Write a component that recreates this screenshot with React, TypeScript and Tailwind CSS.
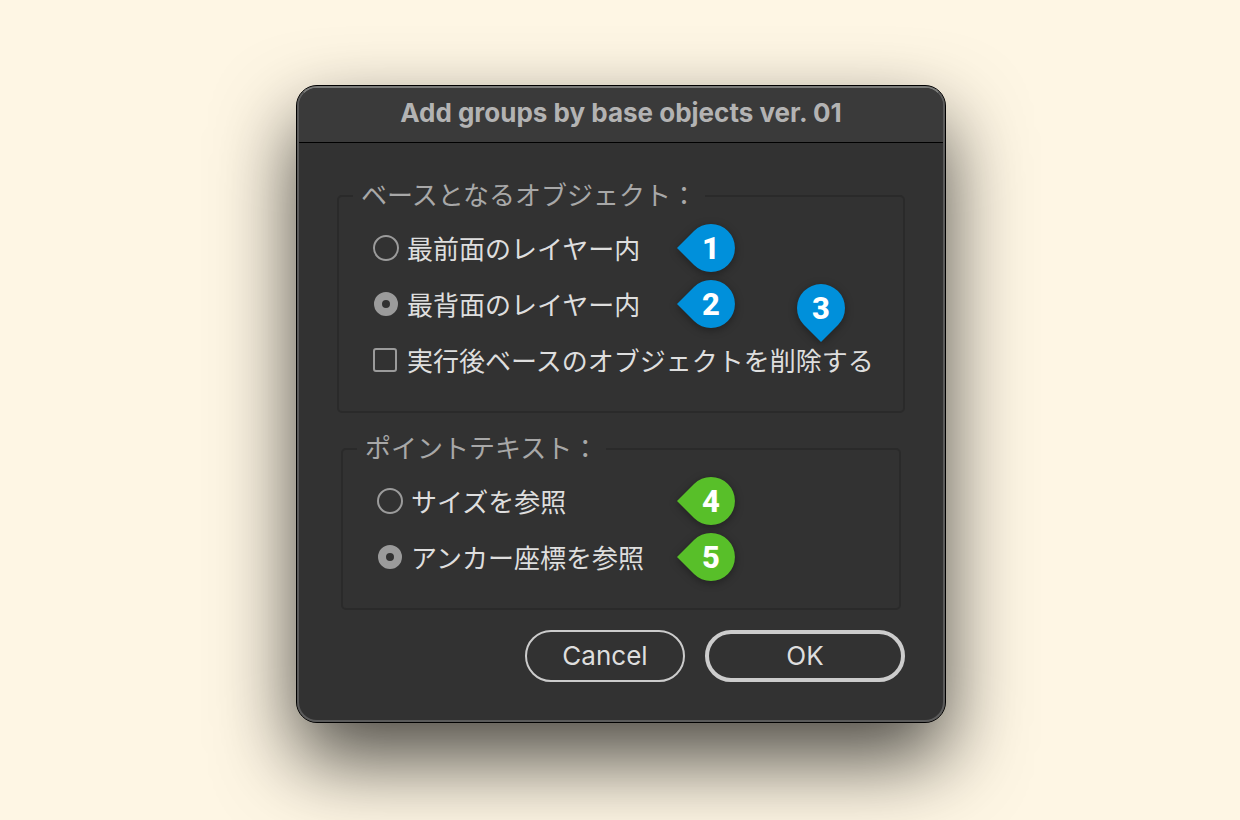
import React, { useState } from 'react';
import clsx from 'clsx';

interface MarkerProps {
  value: number;
  color: 'blue' | 'green';
  point?: 'left' | 'down';
  className?: string;
}

// Numbered drop-shaped marker that points at an option
const Marker: React.FC<MarkerProps> = ({ value, color, point = 'left', className }) => (
  <span
    className={clsx(
      'pointer-events-none absolute flex size-12 items-center justify-center font-[Roboto,sans-serif] text-[31px] leading-none font-extrabold text-white',
      className
    )}
  >
    <svg
      viewBox="0 0 48 48"
      className={clsx(
        'absolute inset-0 size-12 overflow-visible drop-shadow-[0_2px_4px_rgba(0,0,0,0.35)]',
        color === 'blue' ? 'fill-[#0090db]' : 'fill-[#58bf29]'
      )}
      aria-hidden="true"
    >
      <path
        d="M7 7A24 24 0 1 1 7 41L-10 24Z"
        transform={point === 'down' ? 'rotate(-90 24 24)' : undefined}
      />
    </svg>
    <span className="relative">{value}</span>
  </span>
);

interface GroupProps {
  title: string;
  className?: string;
  children: React.ReactNode;
}

const Group: React.FC<GroupProps> = ({ title, className, children }) => (
  <fieldset className={clsx('rounded-[5px] border-2 border-[#2a2a2a] px-3.5 pb-[23px]', className)}>
    <legend className="px-2 pb-1 text-[26px] leading-7 text-[#a8a8a8]">{title}</legend>
    <div className="pt-2 pl-5">{children}</div>
  </fieldset>
);

interface RadioProps {
  name: string;
  label: string;
  checked: boolean;
  onChange: () => void;
  children?: React.ReactNode;
}

const Radio: React.FC<RadioProps> = ({ name, label, checked, onChange, children }) => (
  <div className="relative flex h-14 items-center">
    <label className="flex items-center gap-2 text-[26px] leading-8">
      <input
        type="radio"
        name={name}
        checked={checked}
        onChange={onChange}
        className="size-[26px] appearance-none rounded-full border-2 border-[#9b9b9b] checked:mx-px checked:size-6 checked:border-8"
      />
      {label}
    </label>
    {children}
  </div>
);

const App: React.FC = () => {
  const [layer, setLayer] = useState('back');
  const [reference, setReference] = useState('anchor');
  const [remove, setRemove] = useState(false);

  return (
    <main className="min-h-screen overflow-hidden bg-[#fef6e4] pt-[85px] pb-24 pl-0.5 font-['Noto_Sans_CJK_JP',sans-serif] text-[#dedede]">
      <form
        onSubmit={(e) => e.preventDefault()}
        className="mx-auto w-full max-w-[650px] rounded-[21px] border border-black bg-[#323232] shadow-[0_36px_80px_rgba(0,0,0,0.7)]"
      >
        <div className="rounded-[20px] border-2 border-[#5b5b5b] border-t-[#7a7b79]">
          <header className="rounded-t-[18px] border-b border-black bg-[#3a3a3a] pt-[9px] pb-[13px] text-center">
            <h1 className="font-[Inter,sans-serif] text-[26px] leading-8 font-bold text-[#b3b3b3]">
              Add groups by base objects ver. 01
            </h1>
          </header>

          <div className="flex flex-col gap-5 px-[38px] pt-[37px] pb-[38px]">
            <Group title="ベースとなるオブジェクト：">
              <Radio name="layer" label="最前面のレイヤー内" checked={layer === 'front'} onChange={() => setLayer('front')}>
                <Marker value={1} color="blue" className="top-1 left-[314px]" />
              </Radio>
              <Radio name="layer" label="最背面のレイヤー内" checked={layer === 'back'} onChange={() => setLayer('back')}>
                <Marker value={2} color="blue" className="top-1 left-[314px]" />
              </Radio>
              <div className="relative flex h-14 items-center">
                <label className="flex items-center gap-2.5 text-[26px] leading-8 whitespace-nowrap">
                  <input
                    type="checkbox"
                    checked={remove}
                    onChange={(e) => setRemove(e.target.checked)}
                    className="size-6 appearance-none rounded-[3px] border-2 border-[#9b9b9b] checked:bg-[#9b9b9b]"
                  />
                  実行後ベースのオブジェクトを削除する
                </label>
                <Marker value={3} color="blue" point="down" className="-top-12 left-[424px]" />
              </div>
            </Group>

            <Group title="ポイントテキスト：" className="mx-1">
              <Radio name="reference" label="サイズを参照" checked={reference === 'size'} onChange={() => setReference('size')}>
                <Marker value={4} color="green" className="top-1 left-[310px]" />
              </Radio>
              <Radio name="reference" label="アンカー座標を参照" checked={reference === 'anchor'} onChange={() => setReference('anchor')}>
                <Marker value={5} color="green" className="top-1 left-[310px]" />
              </Radio>
            </Group>

            <div className="flex justify-end gap-5 font-[Inter,sans-serif] text-[26px] leading-8">
              <button type="button" className="h-[52px] w-40 rounded-full border-2 border-[#cccccc]">
                Cancel
              </button>
              <button type="submit" className="h-[52px] w-[200px] rounded-full border-4 border-[#cccccc]">
                OK
              </button>
            </div>
          </div>
        </div>
      </form>
    </main>
  );
};

export default App;
